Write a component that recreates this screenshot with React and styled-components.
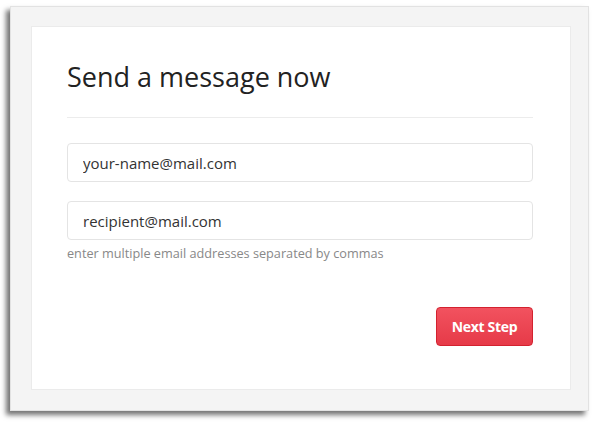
import React from "react";
import styled, { createGlobalStyle } from "styled-components";

const GlobalStyle = createGlobalStyle`
  html, body { margin: 0; padding: 0; background: #ffffff; }
  * { box-sizing: border-box; }
`;

const Page = styled.div`
  width: 600px;
  height: 423px;
  padding: 6px 11px 0 10px;
  font-family: "Open Sans", "Noto Sans", sans-serif;
`;

const Card = styled.div`
  width: 579px;
  height: 405px;
  background: #f4f4f4;
  border: 1px solid #e2e2e2;
  box-shadow: -4px 4px 5px rgba(0, 0, 0, 0.55);
  padding: 19px 17px 20px 20px;
`;

const Panel = styled.form`
  height: 100%;
  background: #ffffff;
  border: 1px solid #ebebeb;
  padding: 32px 37px 0 35px;
  display: flex;
  flex-direction: column;
`;

const Title = styled.h1`
  margin: 0;
  font-size: 27px;
  line-height: 36px;
  font-weight: 400;
  color: #222;
  letter-spacing: 0;
  padding-bottom: 22px;
  border-bottom: 1px solid #ececec;
  margin-bottom: 25px;
`;

const Field = styled.input`
  width: 100%;
  height: 39px;
  border: 1px solid #e4e4e4;
  border-radius: 4px;
  padding: 0 15px;
  font-family: inherit;
  font-size: 15px;
  color: #333;
  background: #fff;
  outline: none;
  margin-bottom: ${(p) => p.$gap}px;
  &::placeholder { color: #333; }
`;

const Hint = styled.p`
  margin: 5px 0 0;
  font-size: 12.7px;
  color: #888;
  line-height: 17px;
`;

const Actions = styled.div`
  display: flex;
  justify-content: flex-end;
  margin-top: 45px;
`;

const Button = styled.button`
  width: 97px;
  height: 39px;
  border: 1px solid #d3222f;
  border-radius: 4px;
  background: linear-gradient(#f2525f, #e63a48);
  color: #fff;
  font-family: inherit;
  font-size: 14px;
  font-weight: 700;
  letter-spacing: -0.3px;
  cursor: pointer;
`;

export default function App() {
  return (
    <>
      <GlobalStyle />
      <Page>
        <Card>
          <Panel onSubmit={(e) => e.preventDefault()}>
            <Title>Send a message now</Title>
            <Field $gap={19} type="text" placeholder="your-name@mail.com" />
            <Field $gap={0} type="text" placeholder="recipient@mail.com" />
            <Hint>enter multiple email addresses separated by commas</Hint>
            <Actions>
              <Button type="submit">Next Step</Button>
            </Actions>
          </Panel>
        </Card>
      </Page>
    </>
  );
}
